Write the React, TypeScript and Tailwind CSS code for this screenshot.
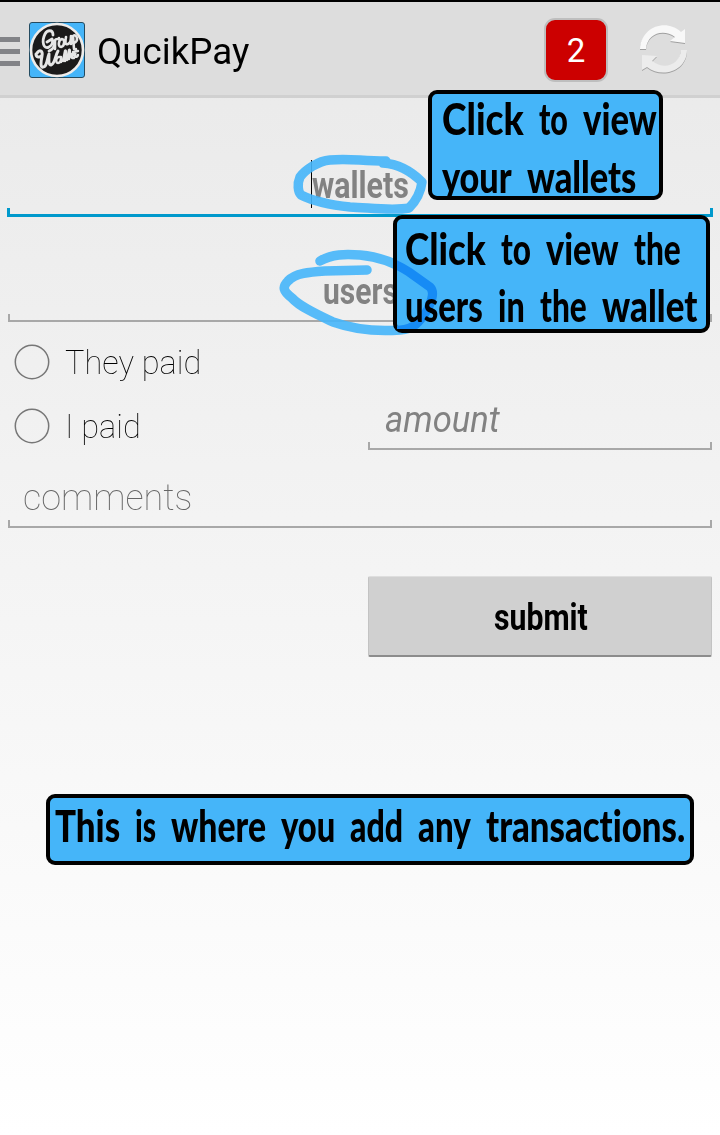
import { useLayoutEffect, useRef, useState } from "react";

type FitProps = { text: string; width: number; className?: string };

/** Text scaled horizontally so that it fills a given width. */
function Fit({ text, width, className = "" }: FitProps) {
  const ref = useRef<HTMLSpanElement>(null);
  const [scale, setScale] = useState(1);
  useLayoutEffect(() => {
    if (ref.current) setScale(width / ref.current.offsetWidth);
  }, [text, width]);
  return (
    <span className={`block shrink-0 whitespace-nowrap ${className}`} style={{ width }}>
      <span ref={ref} className="inline-block origin-left" style={{ transform: `scaleX(${scale})` }}>
        {text}
      </span>
    </span>
  );
}

type Word = [string, number];

function CalloutLine({ words, className = "" }: { words: Word[]; className?: string }) {
  return (
    <div
      className={`relative flex h-[58px] gap-[15px] font-[Lato,sans-serif] text-[43px] leading-[58px] font-black text-black [font-variant-ligatures:none] ${className}`}
    >
      {words.map(([text, width]) => (
        <Fit key={text} text={text} width={width} />
      ))}
    </div>
  );
}

const usersLoop =
  "M320 261 C332 254 345 254 360 255 C382 257 397 264 409 272 L430 287 C436 293 430 303 428 309 C420 322 414 329 400 330 C375 332 350 328 333 322 C318 315 300 307 292 298 C283 291 282 287 288 281 C295 273 310 272 325 271 L367 270";

function Underline({ active = false }: { active?: boolean }) {
  return active ? (
    <div className="-mx-px h-[9px] border-x-3 border-b-3 border-[#0099cc]" />
  ) : (
    <div className="h-2 border-x-2 border-b-2 border-[#a8a8a8]" />
  );
}

function Logo() {
  return (
    <svg className="ml-[9px] h-14 w-14" viewBox="0 0 56 56">
      <rect x=".5" y=".5" width="55" height="55" rx="2.5" fill="#45b5f9" stroke="#244b60" />
      <circle cx="28" cy="28" r="26" fill="#1b1a1a" stroke="#eeecea" strokeWidth="2.6" />
      <g fill="none" stroke="#e6e6e6" strokeLinecap="round" strokeLinejoin="round">
        <path
          strokeWidth="2.8"
          d="M24 13c0-6-6-5-8-1c-4 8-1 16 4 13c4-2 4-6 3-8l-5 3M23 18c5 3 2 9-3 11"
        />
        <path
          strokeWidth="2.6"
          d="M26 27l0-9c1-2 4 0 4-2M33 17c-4 1-4 8-1 8c4-1 4-8 1-8M37 15c-1 5-1 8 2 7c3-1 3-4 3-8v8M45 27l-1-13c4-3 6 5 1 7"
        />
        <path
          strokeWidth="3"
          d="M8 31c3-4 6-2 5 3c-1 5-2 12 1 11c4 0 4-8 6-13c0 5-1 11 2 11c4-1 4-9 7-14M7 32c0 3 3 4 5 2"
        />
        <path
          strokeWidth="2.4"
          d="M31 35c-4-1-5 6-2 6c2 0 3-3 3-6v5M34 39l2-10c2-3 0 7 0 10M38 38l2-10c2-2 0 7 0 9M43 34c4-1 3-4 1-3c-3 2-2 6 1 5M47 27l-1 7c1 2 3 0 3-1M44 30l5-1"
        />
      </g>
    </svg>
  );
}

function Refresh() {
  return (
    <svg className="ml-8 h-[50px] w-[50px] drop-shadow-[0_1px_0.5px_rgba(0,0,0,0.28)]" viewBox="0 0 50 50">
      <path fill="#f8f8f8" d="M0 24C1 2 26-7 41 7L45 4V18L30 16L35 12C23 3 7 9 6 24Z" />
      <path fill="#ececec" d="M47 25C47 46 22 54 7 42L2 45V30L17 31L12 36C25 46 40 39 41 25Z" />
    </svg>
  );
}

function Radio({ label, width }: { label: string; width: number }) {
  return (
    <label className="flex h-16 shrink-0 items-center">
      <span className="flex w-[42px] pl-1.5">
        <svg className="h-9 w-9" viewBox="0 0 36 36">
          <circle cx="18" cy="18" r="16.7" fill="none" stroke="#777" strokeWidth="1.5" />
        </svg>
      </span>
      <Fit text={label} width={width} className="mt-0.5 ml-[15px] text-[33px] leading-10 font-thin text-black" />
    </label>
  );
}

export default function App() {
  return (
    <main className="relative flex h-[1135px] w-[720px] flex-col overflow-hidden bg-linear-to-b from-[#e9e9e9] to-white font-[Roboto,sans-serif]">
      <header className="flex h-[98px] shrink-0 items-center border-t-2 border-b-3 border-t-black border-b-[#d0d0d0] bg-[#dddddd] pt-[3px]">
        <div className="mt-0.5 flex w-5 flex-col gap-[7px]">
          <span className="h-[5px] bg-[#828387]" />
          <span className="h-[5px] bg-[#828387]" />
          <span className="h-[5px] bg-[#828387]" />
        </div>
        <Logo />
        <Fit text="QucikPay" width={152} className="mt-1 ml-3 text-[36px] leading-[42px] text-black" />
        <div className="ml-auto flex h-16 w-16 items-center justify-center rounded-[11px] border-2 border-[#bebebe] bg-[#cc0000] pt-0.5 text-[33px] text-white">
          2
        </div>
        <Refresh />
        <div className="w-[30px]" />
      </header>

      <form className="flex flex-col px-2">
        <div className="flex h-[119px] flex-col">
          <div className="mt-[62px] ml-[303px] flex h-12 items-center border-l border-black">
            <Fit text="wallets" width={97} className="mt-1 text-[36px] leading-[42px] font-bold text-[#828282]" />
          </div>
          <div className="mt-auto">
            <Underline active />
          </div>
        </div>
        <div className="flex h-[105px] flex-col">
          <Fit text="users" width={75} className="mt-[54px] ml-[315px] text-[36px] leading-[42px] font-bold text-[#828282]" />
          <div className="mt-auto">
            <Underline />
          </div>
        </div>
        <div className="flex h-32 pt-2">
          <div className="flex w-[360px] flex-col">
            <Radio label="They paid" width={136} />
            <Radio label="I paid" width={76} />
          </div>
          <div className="flex h-[120px] flex-1 flex-col justify-end">
            <Fit text="amount" width={115} className="mb-px ml-[17px] text-[37px] leading-[42px] text-[#828282] italic" />
            <Underline />
          </div>
        </div>
        <div className="flex h-[78px] flex-col justify-end">
          <Fit text="comments" width={170} className="mb-px ml-[15px] text-[37px] leading-[42px] font-thin text-[#666]" />
          <Underline />
        </div>
        <button
          type="button"
          className="mt-12 ml-auto flex h-[81px] w-[344px] items-center justify-center rounded-[2px] border border-t-[#dedede] border-r-[#c3c3c3] border-b-2 border-b-[#8c8c8c] border-l-[#c3c3c3] bg-[#d0d0d0]"
        >
          <Fit text="submit" width={94} className="mt-1 ml-px text-left text-[36px] leading-[42px] font-bold text-black" />
        </button>
      </form>

      <svg className="absolute inset-0 h-[1135px] w-[720px]" viewBox="0 0 720 1135">
        <g fill="none" stroke="#45b5f9" strokeOpacity=".9" strokeWidth="9.5" strokeLinecap="round" strokeLinejoin="round">
          <path d="M386 161C360 161 349 158 330 160C318 161 305 170 300 177C297 184 298 192 301 195C315 202 330 205 350 207C372 208 393 211 409 208C417 200 421 190 422 182C411 171 399 164 383 163" />
          <path d={usersLoop} />
        </g>
      </svg>

      <section className="absolute top-[90px] left-[428px] h-[110px] w-[235px] rounded-[9px] border-4 border-black bg-[#45b5f9] pl-2.5">
        <CalloutLine words={[["Click", 82], ["to", 29], ["view", 74]]} className="-mt-[4px]" />
        <CalloutLine words={[["your", 70], ["wallets", 109]]} />
      </section>

      <section className="absolute top-[215px] left-[393px] h-[118px] w-[317px] rounded-[9px] border-4 border-black bg-[#45b5f9] pl-2">
        <svg className="absolute inset-0 h-[110px] w-[309px]" viewBox="397 219 309 110">
          <path d={usersLoop} fill="none" stroke="#168bf5" strokeWidth="9" strokeLinecap="round" />
        </svg>
        <CalloutLine words={[["Click", 81], ["to", 30], ["view", 73], ["the", 47]]} className="mt-px" />
        <CalloutLine words={[["users", 78], ["in", 27], ["the", 47], ["wallet", 95]]} className="-mt-px" />
      </section>

      <section className="absolute top-[794px] left-[46px] h-[71px] w-[648px] rounded-[9px] border-4 border-black bg-[#45b5f9] pl-[5px]">
        <CalloutLine
          words={[["This", 65], ["is", 21], ["where", 95], ["you", 54], ["add", 53], ["any", 53], ["transactions.", 199]]}
          className="-mt-px"
        />
      </section>
    </main>
  );
}
